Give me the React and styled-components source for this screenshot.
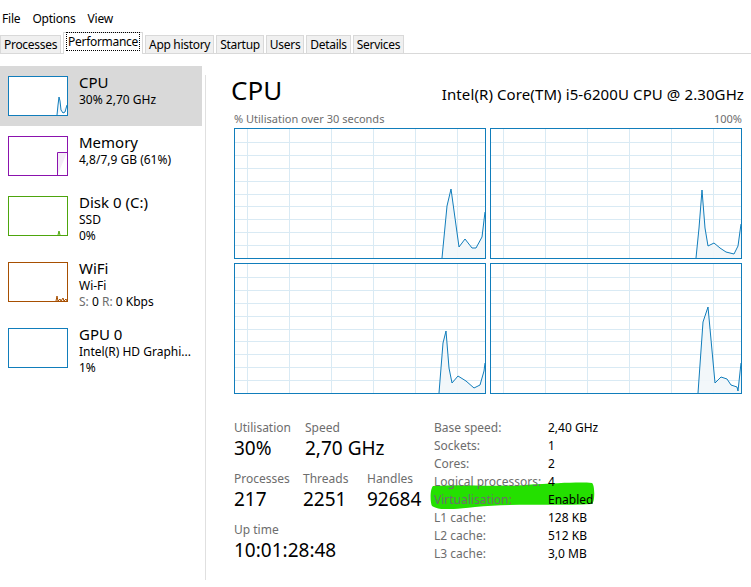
import React from "react";
import styled, { createGlobalStyle } from "styled-components";

const GlobalStyle = createGlobalStyle`
  html, body {
    margin: 0;
    padding: 0;
    background: #fff;
  }
  body {
    font-family: "Noto Sans", "Liberation Sans", sans-serif;
    color: #000;
  }
`;

const Window = styled.div`
  width: 751px;
  height: 587px;
  overflow: hidden;
  display: flex;
  flex-direction: column;
`;

const MenuBar = styled.div`
  display: flex;
  gap: 12px;
  height: 30px;
  padding: 7px 0 0 2px;
  box-sizing: border-box;
  font-size: 12px;
  line-height: 23px;
  letter-spacing: -0.2px;
`;

const TabStrip = styled.div`
  display: flex;
  align-items: flex-end;
  gap: 2px;
  height: 24px;
  box-sizing: border-box;
  border-bottom: 1px solid #d9d9d9;
`;

const Tab = styled.div`
  height: ${(p) => (p.$active ? "22px" : "18px")};
  margin-bottom: ${(p) => (p.$active ? "-1px" : "0")};
  padding: 0 3px;
  box-sizing: border-box;
  border: 1px solid #d9d9d9;
  border-bottom: none;
  background: ${(p) => (p.$active ? "#fff" : "#f0f0f0")};
  font-size: 12px;
  letter-spacing: -0.3px;
  line-height: ${(p) => (p.$active ? "18px" : "17px")};
  white-space: nowrap;
`;

const FocusText = styled.span`
  outline: 1px dotted #000;
  outline-offset: 0;
  padding: 0 1px;
`;

const Body = styled.div`
  flex: 1;
  display: flex;
`;

const Sidebar = styled.div`
  width: 205px;
  padding-top: 12px;
  box-sizing: border-box;
`;

const Divider = styled.div`
  width: 1px;
  background: #e0e0e0;
  margin: 21px 0 7px;
`;

const Item = styled.div`
  width: 202px;
  display: flex;
  gap: 11px;
  padding: 7px 8px ${(p) => (p.$tall ? "8px" : "10px")};
  box-sizing: border-box;
  background: ${(p) => (p.$active ? "#d9d9d9" : "transparent")};
`;

const Thumb = styled.div`
  flex: none;
  width: 60px;
  height: 40px;
  margin-top: 3px;
  border: 1px solid ${(p) => p.$color};
  box-sizing: border-box;
  background: #fff;

  svg {
    display: block;
  }
`;

const ItemText = styled.div`
  display: flex;
  flex-direction: column;
  margin-top: -1px;
`;

const ItemTitle = styled.div`
  font-size: 15px;
  line-height: 21px;
  margin-bottom: -1px;
`;

const ItemSub = styled.div`
  font-size: 12px;
  line-height: 16px;
  white-space: nowrap;
`;

const Dim = styled.span`
  color: #6d6d6d;
`;

const Main = styled.div`
  flex: 1;
  padding: 20px 9px 0 28px;
  display: flex;
  flex-direction: column;
`;

const TitleRow = styled.div`
  display: flex;
  justify-content: space-between;
  align-items: baseline;
  height: 32px;
`;

const BigTitle = styled.div`
  font-size: 26px;
  line-height: 32px;
  margin-left: -3px;
`;

const Model = styled.div`
  font-size: 15px;
  letter-spacing: 0.1px;
  margin-right: -2px;
`;

const Caption = styled.div`
  display: flex;
  justify-content: space-between;
  font-size: 11px;
  line-height: 14px;
  color: #6d6d6d;
  margin: 6px 0 2px;
`;

const GraphGrid = styled.div`
  display: grid;
  grid-template-columns: repeat(2, 252px);
  grid-auto-rows: 131px;
  gap: 4px;
`;

const GraphBox = styled.div`
  border: 1px solid #117dbb;
  box-sizing: border-box;
  background: #fff;

  svg {
    display: block;
  }
`;

const Stats = styled.div`
  display: flex;
  margin-top: 26px;
`;

const LeftStats = styled.div`
  width: 200px;
`;

const StatRow = styled.div`
  display: flex;
  margin-bottom: 11px;
`;

const Stat = styled.div`
  width: ${(p) => (p.$w ? `${p.$w}px` : "auto")};
`;

const StatLabel = styled.div`
  font-size: 12px;
  line-height: 16px;
  color: #6d6d6d;
`;

const StatValue = styled.div`
  font-size: 19px;
  line-height: 24px;
  white-space: nowrap;
`;

const Details = styled.div`
  position: relative;
  isolation: isolate;
  margin-top: -1px;
  display: grid;
  grid-template-columns: 114px auto;
  align-content: start;
  font-size: 12px;
  line-height: 18px;
`;

const DetailLabel = styled.div`
  color: #6d6d6d;
  white-space: nowrap;
`;

const DetailValue = styled.div`
  white-space: nowrap;
`;

const Highlight = styled.svg`
  position: absolute;
  left: -4px;
  top: 62px;
  z-index: -1;
`;

const graphs = [
  [[207, 129], [212, 77], [216, 60], [224, 118], [230, 110], [237, 119], [241, 119], [247, 108], [250, 83]],
  [[205, 129], [208, 99], [211, 61], [214, 99], [217, 117], [223, 114], [229, 119], [235, 123], [243, 125], [247, 117], [250, 95]],
  [[204, 129], [208, 79], [211, 67], [214, 104], [217, 119], [223, 112], [231, 117], [239, 124], [245, 121], [249, 107], [250, 99]],
  [[207, 129], [212, 58], [217, 43], [224, 119], [230, 113], [236, 115], [240, 121], [246, 123], [247, 127], [250, 99]],
];

const vLines = [12, 54, 96, 138, 180, 222];
const hLines = [1, 2, 3, 4, 5, 6, 7, 8, 9].map((i) => Math.round(i * 12.9) + 0.5);

const CpuGraph = ({ points }) => {
  const line = points.map((p) => p.join(",")).join(" ");
  const fill = `${line} 250,129 ${points[0][0]},129`;
  return (
    <GraphBox>
      <svg width="250" height="129" viewBox="0 0 250 129">
        {vLines.map((x) => (
          <line key={`v${x}`} x1={x + 0.5} y1="0" x2={x + 0.5} y2="129" stroke="#d9eaf4" />
        ))}
        {hLines.map((y) => (
          <line key={`h${y}`} x1="0" y1={y} x2="250" y2={y} stroke="#d9eaf4" />
        ))}
        <polygon points={fill} fill="#f1f6fa" fillOpacity="0.9" />
        <polyline points={line} fill="none" stroke="#117dbb" strokeWidth="1" />
      </svg>
    </GraphBox>
  );
};

const Spark = ({ points, stroke, fill }) => (
  <svg width="58" height="38" viewBox="0 0 58 38">
    {points && (
      <polyline points={points} fill={fill} stroke={stroke} strokeWidth="1" />
    )}
  </svg>
);

const items = [
  {
    title: "CPU",
    color: "#117dbb",
    spark: "48,38 49,28 50,20 51,24 52,33 54,36 56,35 58,28",
    fill: "#f1f6fa",
    lines: ["30% 2,70 GHz"],
    active: true,
  },
  {
    title: "Memory",
    color: "#8b12ae",
    spark: "48.5,38 48.5,15.5 58,15.5",
    fill: "#f4ecf7",
    lines: ["4,8/7,9 GB (61%)"],
  },
  {
    title: "Disk 0 (C:)",
    color: "#4da60c",
    spark: "49,38 50,34 51,38",
    fill: "#eff7e9",
    lines: ["SSD", "0%"],
  },
  {
    title: "WiFi",
    color: "#a74f01",
    spark: "47,38 48,33 49,38 51,36 52,38 54,35 55,38 57,36 58,38",
    fill: "#fcf3eb",
    lines: [
      "Wi-Fi",
      <>
        <Dim>S:</Dim> 0 <Dim>R:</Dim> 0 Kbps
      </>,
    ],
  },
  {
    title: "GPU 0",
    color: "#117dbb",
    lines: ["Intel(R) HD Graphi...", "1%"],
  },
];

const details = [
  ["Base speed:", "2,40 GHz"],
  ["Sockets:", "1"],
  ["Cores:", "2"],
  ["Logical processors:", "4"],
  ["Virtualisation:", "Enabled"],
  ["L1 cache:", "128 KB"],
  ["L2 cache:", "512 KB"],
  ["L3 cache:", "3,0 MB"],
];

const tabs = ["Processes", "Performance", "App history", "Startup", "Users", "Details", "Services"];

const App = () => {
  return (
    <Window>
      <GlobalStyle />
      <MenuBar>
        <span>File</span>
        <span>Options</span>
        <span>View</span>
      </MenuBar>
      <TabStrip>
        {tabs.map((t) => (
          <Tab key={t} $active={t === "Performance"}>
            {t === "Performance" ? <FocusText>{t}</FocusText> : t}
          </Tab>
        ))}
      </TabStrip>
      <Body>
        <Sidebar>
          {items.map((it) => (
            <Item key={it.title} $active={it.active} $tall={it.lines.length > 1}>
              <Thumb $color={it.color}>
                <Spark points={it.spark} stroke={it.color} fill={it.fill} />
              </Thumb>
              <ItemText>
                <ItemTitle>{it.title}</ItemTitle>
                {it.lines.map((l, i) => (
                  <ItemSub key={i}>{l}</ItemSub>
                ))}
              </ItemText>
            </Item>
          ))}
        </Sidebar>
        <Divider />
        <Main>
          <TitleRow>
            <BigTitle>CPU</BigTitle>
            <Model>Intel(R) Core(TM) i5-6200U CPU @ 2.30GHz</Model>
          </TitleRow>
          <Caption>
            <span>% Utilisation over 30 seconds</span>
            <span>100%</span>
          </Caption>
          <GraphGrid>
            {graphs.map((g, i) => (
              <CpuGraph key={i} points={g} />
            ))}
          </GraphGrid>
          <Stats>
            <LeftStats>
              <StatRow>
                <Stat $w={71}>
                  <StatLabel>Utilisation</StatLabel>
                  <StatValue>30%</StatValue>
                </Stat>
                <Stat>
                  <StatLabel>Speed</StatLabel>
                  <StatValue>2,70 GHz</StatValue>
                </Stat>
              </StatRow>
              <StatRow>
                <Stat $w={69}>
                  <StatLabel>Processes</StatLabel>
                  <StatValue>217</StatValue>
                </Stat>
                <Stat $w={64}>
                  <StatLabel>Threads</StatLabel>
                  <StatValue>2251</StatValue>
                </Stat>
                <Stat>
                  <StatLabel>Handles</StatLabel>
                  <StatValue>92684</StatValue>
                </Stat>
              </StatRow>
              <StatRow>
                <Stat>
                  <StatLabel>Up time</StatLabel>
                  <StatValue>10:01:28:48</StatValue>
                </Stat>
              </StatRow>
            </LeftStats>
            <Details>
              <Highlight width="165" height="28" viewBox="0 0 165 28">
                <path
                  d="M3 5 C 30 3, 60 6, 95 4 S 150 1, 162 2 C 165 4, 165 21, 162 23 C 120 25, 80 22, 45 26 S 8 28, 2 25 C 0 21, 0 8, 3 5 Z"
                  fill="#24e000"
                />
              </Highlight>
              {details.map(([k, v]) => (
                <React.Fragment key={k}>
                  <DetailLabel>{k}</DetailLabel>
                  <DetailValue>{v}</DetailValue>
                </React.Fragment>
              ))}
            </Details>
          </Stats>
        </Main>
      </Body>
    </Window>
  );
};

export default App;
